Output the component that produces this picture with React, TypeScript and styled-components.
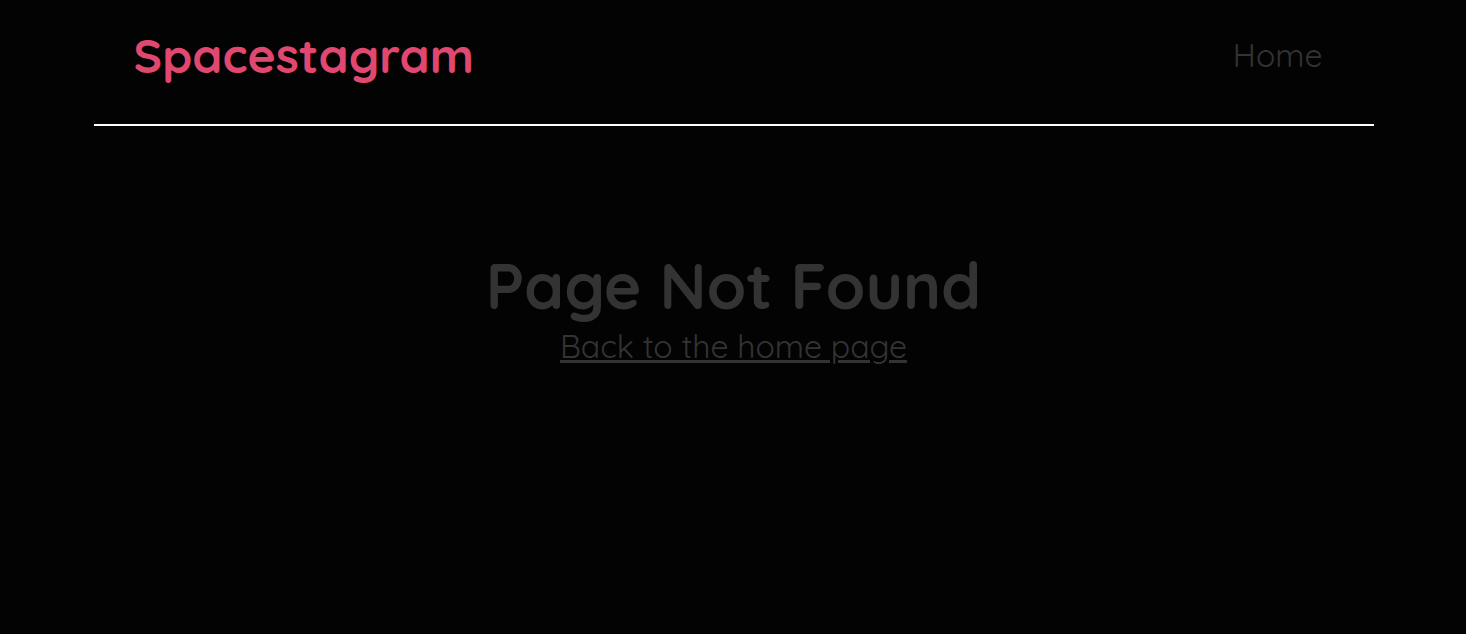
import React from 'react'
import styled, { createGlobalStyle } from 'styled-components'

const GlobalStyle = createGlobalStyle`
  html, body {
    margin: 0;
    padding: 0;
    background: #030303;
    font-family: Quicksand, Lato, "Noto Sans", sans-serif;
  }
`

function App() {
  return (
    <>
      <GlobalStyle />
      <Page>
        <Header>
          <Logo href="#">Spacestagram</Logo>
          <Nav>
            <NavLink href="#">Home</NavLink>
          </Nav>
        </Header>
        <Main>
          <Title>Page Not Found</Title>
          <BackLink href="#">Back to the home page</BackLink>
        </Main>
      </Page>
    </>
  )
}

const Page = styled.div`
  max-width: 1280px;
  margin: 0 auto;
  padding-left: 1px;
  min-height: 634px;
`

const Header = styled.header`
  display: flex;
  justify-content: space-between;
  align-items: center;
  height: 124px;
  padding: 0 51px 0 40px;
  border-bottom: 2px solid #ffffff;
`

const Logo = styled.a`
  color: #e0486f;
  font-size: 48px;
  font-weight: 700;
  text-decoration: none;
  margin-top: -14px;
`

const Nav = styled.nav`
  display: flex;
  gap: 24px;
  margin-top: -15px;
`

const NavLink = styled.a`
  color: #333333;
  font-size: 32px;
  font-weight: 400;
  text-decoration: none;
`

const Main = styled.main`
  display: flex;
  flex-direction: column;
  align-items: center;
  padding-top: 121px;
`

const Title = styled.h1`
  margin: 0;
  color: #333333;
  font-size: 64px;
  font-weight: 700;
  line-height: 1.2;
`

const BackLink = styled.a`
  color: #333333;
  font-size: 32px;
  font-weight: 400;
  text-decoration: underline;
  line-height: 1.4;
`

export default App
